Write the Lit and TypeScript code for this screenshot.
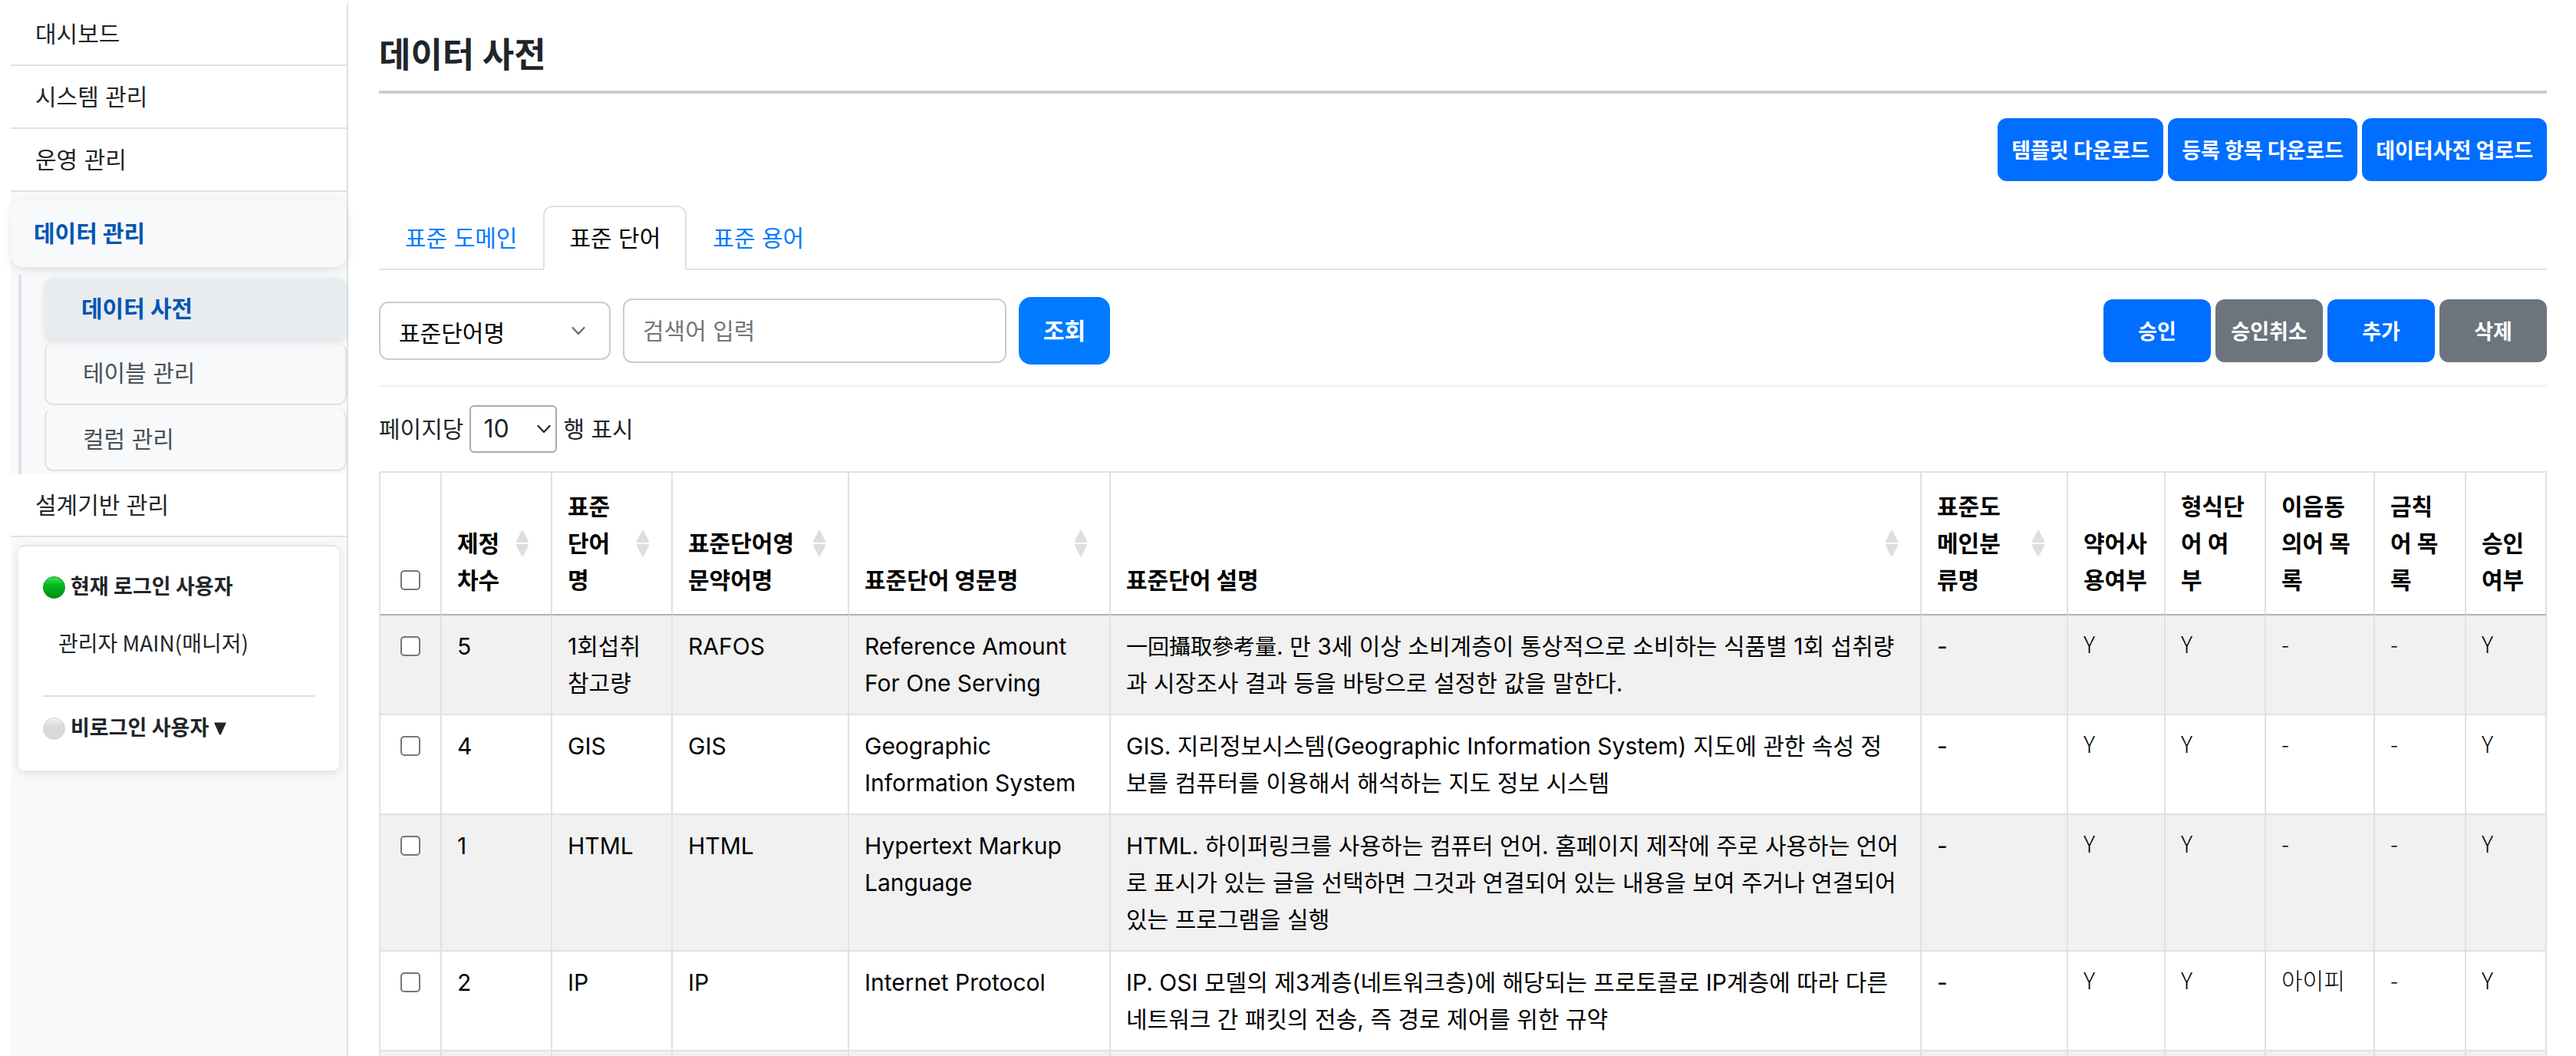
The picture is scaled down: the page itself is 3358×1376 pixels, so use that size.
import { LitElement, html, css } from "lit";
import { customElement, property } from "lit/decorators.js";
import { classMap } from "lit/directives/class-map.js";

interface Column {
  label: string;
  width: string;
  sortable: boolean;
  light?: boolean;
}

const COLUMNS: Column[] = [
  { label: "제정차수", width: "w-round", sortable: true },
  { label: "표준단어명", width: "w-word", sortable: true },
  { label: "표준단어영문약어명", width: "w-abbr", sortable: true },
  { label: "표준단어 영문명", width: "w-english", sortable: true },
  { label: "표준단어 설명", width: "w-auto", sortable: true },
  { label: "표준도메인분류명", width: "w-domain", sortable: true },
  { label: "약어사용여부", width: "w-use", sortable: false, light: true },
  { label: "형식단어 여부", width: "w-form", sortable: false, light: true },
  { label: "이음동의어 목록", width: "w-synonym", sortable: false, light: true },
  { label: "금칙어 목록", width: "w-banned", sortable: false, light: true },
  { label: "승인여부", width: "w-approved", sortable: false, light: true },
];

const ROWS: string[][] = [
  [
    "5", "1회섭취참고량", "RAFOS", "Reference Amount For One Serving",
    "一回攝取參考量. 만 3세 이상 소비계층이 통상적으로 소비하는 식품별 1회 섭취량과 시장조사 결과 등을 바탕으로 설정한 값을 말한다.",
    "-", "Y", "Y", "-", "-", "Y",
  ],
  [
    "4", "GIS", "GIS", "Geographic Information System",
    "GIS. 지리정보시스템(Geographic Information System) 지도에 관한 속성 정\n보를 컴퓨터를 이용해서 해석하는 지도 정보 시스템",
    "-", "Y", "Y", "-", "-", "Y",
  ],
  [
    "1", "HTML", "HTML", "Hypertext Markup Language",
    "HTML. 하이퍼링크를 사용하는 컴퓨터 언어. 홈페이지 제작에 주로 사용하는 언어로 표시가 있는 글을 선택하면 그것과 연결되어 있는 내용을 보여 주거나 연결되어 있는 프로그램을 실행",
    "-", "Y", "Y", "-", "-", "Y",
  ],
  [
    "2", "IP", "IP", "Internet Protocol",
    "IP. OSI 모델의 제3계층(네트워크층)에 해당되는 프로토콜로 IP계층에 따라 다른 네트워크 간 패킷의 전송, 즉 경로 제어를 위한 규약",
    "-", "Y", "Y", "아이피", "-", "Y",
  ],
];

@customElement("status-dot")
class StatusDot extends LitElement {
  @property({ type: Boolean }) online = false;

  static styles = css`
    :host { display: block; width: 29px; height: 29px; flex: none; }
    svg { display: block; width: 100%; height: 100%; }
  `;

  render() {
    const [rim, top, mid, bottom] = this.online
      ? ["#0a8f1c", "#3be858", "#00b81c", "#008d12"]
      : ["#d2d2d2", "#f4f4f4", "#dadada", "#d8d8d8"];
    return html`
      <svg viewBox="0 0 29 29" aria-hidden="true">
        <defs>
          <linearGradient id="fill" x1="0" y1="0" x2="0" y2="1">
            <stop offset="0" stop-color=${top}></stop>
            <stop offset="0.4" stop-color=${mid}></stop>
            <stop offset="1" stop-color=${bottom}></stop>
          </linearGradient>
        </defs>
        <circle cx="14.5" cy="14.5" r="14" fill="url(#fill)" stroke=${rim}></circle>
      </svg>
    `;
  }
}

@customElement("side-nav")
class SideNav extends LitElement {
  static styles = css`
    :host {
      display: block;
      background: #f8f9fb;
      border-right: 2px solid #dee2e6;
      color: #212529;
      font-size: 30px;
      line-height: 48px;
    }
    a { display: block; color: inherit; text-decoration: none; }
    .item { padding: 16px 32px; background: #fff; border-bottom: 2px solid #dee2e6; }
    .group {
      margin: 10px 0;
      padding: 20px 30px;
      border-radius: 16px;
      color: #0056b3;
      font-weight: 700;
      background: #f8f9fb;
      box-shadow: 0 4px 12px rgba(0, 0, 0, 0.1);
    }
    .sub {
      display: flex;
      flex-direction: column;
      gap: 4px;
      margin-left: 10px;
      padding: 4px 0 4px 30px;
      border-left: 4px solid #dee2e6;
    }
    .sub a {
      padding: 16px 48px;
      border: 2px solid #dee2e6;
      border-top: 0;
      border-radius: 12px;
      color: #495057;
    }
    .sub a.current {
      border: 0;
      background: #e9ecef;
      color: #0056b3;
      font-weight: 700;
      box-shadow: 0 4px 10px rgba(0, 0, 0, 0.1);
    }
    .users {
      margin: 10px;
      padding: 32px 32px 34px;
      border-top: 2px solid #dee2e6;
      border-radius: 8px;
      background: #fff;
      box-shadow: 0 4px 12px rgba(0, 0, 0, 0.1);
      font-size: 27px;
      line-height: 42px;
    }
    .heading { display: flex; align-items: center; gap: 7px; font-weight: 700; }
    .name { padding: 30px 20px 48px; font-family: "Noto Sans CJK KR", sans-serif; font-size: 28px; }
    .toggle {
      width: 100%;
      padding: 20px 0 0;
      border: 0;
      border-top: 2px solid #ddd;
      background: none;
      color: inherit;
      font-family: inherit;
      font-size: inherit;
      line-height: inherit;
    }
    .caret { width: 16px; height: 17px; }
  `;

  render() {
    return html`
      <nav>
        <a class="item" href="#dashboard">대시보드</a>
        <a class="item" href="#system">시스템 관리</a>
        <a class="item" href="#operation">운영 관리</a>
        <a class="group" href="#data">데이터 관리</a>
        <div class="sub">
          <a class="current" href="#dictionary">데이터 사전</a>
          <a href="#tables">테이블 관리</a>
          <a href="#columns">컬럼 관리</a>
        </div>
        <a class="item" href="#design">설계기반 관리</a>
      </nav>
      <section class="users">
        <div class="heading"><status-dot online></status-dot>현재 로그인 사용자</div>
        <div class="name">관리자 MAIN(매니저)</div>
        <button class="toggle heading" type="button">
          <status-dot></status-dot>비로그인 사용자
          <svg class="caret" viewBox="0 0 16 17" aria-hidden="true">
            <path d="M1 0.5H15Q16 0.5 15.6 1.6L9 16Q8 17.4 7 16L0.4 1.6Q0 0.5 1 0.5Z" fill="#212529"></path>
          </svg>
        </button>
      </section>
    `;
  }
}

@customElement("word-table")
class WordTable extends LitElement {
  static styles = css`
    :host { display: block; color: #000; font-size: 30px; line-height: 48px; }
    table {
      width: 100%;
      table-layout: fixed;
      border-collapse: separate;
      border-spacing: 0;
      border-top: 2px solid #dee2e6;
      border-left: 2px solid #dee2e6;
    }
    th, td {
      padding: 16px 20px;
      border-right: 2px solid #dee2e6;
      border-bottom: 2px solid #dee2e6;
      text-align: left;
      vertical-align: top;
    }
    td { white-space: pre-line; }
    th { padding: 20px; border-bottom-color: #b0b1b3; vertical-align: bottom; font-weight: 700; }
    th.sortable { padding-right: 28px; }
    tbody tr:nth-child(odd) { background: #f1f1f1; }
    .w-check { width: 80px; }
    .w-round { width: 144px; }
    .w-word { width: 157px; }
    .w-abbr { width: 230px; }
    .w-english { width: 341px; }
    .w-domain { width: 191px; }
    .w-use { width: 127px; }
    .w-form { width: 131px; }
    .w-synonym { width: 142px; }
    .w-banned { width: 119px; }
    .w-approved { width: 105px; }
    .head { display: flex; align-items: flex-end; justify-content: space-between; gap: 14px; height: 144px; }
    .sort { flex: none; align-self: center; width: 18px; height: 36px; }
    .light { font-family: "Noto Sans CJK KR", sans-serif; font-weight: 200; line-height: 40px; }
    .hanja { font-size: 28px; line-height: 28px; }
    .pick { padding: 16px 0; }
    th.pick { padding: 20px 0; }
    .pick label { display: flex; justify-content: center; align-items: center; height: 48px; }
    input {
      appearance: none;
      width: 26px;
      height: 26px;
      margin: 0;
      border: 2px solid #767676;
      border-radius: 5px;
      background: #fff;
    }
  `;

  private renderHead(column: Column) {
    if (!column.sortable) return html`<th>${column.label}</th>`;
    return html`
      <th class="sortable">
        <div class="head">
          <span>${column.label}</span>
          <svg class="sort" viewBox="0 0 18 36" aria-hidden="true">
            <path d="M8 1.5Q9 0 10 1.5L17 15Q17.5 17 15.5 17H2.5Q0.5 17 1 15Z" fill="#dedede"></path>
            <path d="M8 34.5Q9 36 10 34.5L17 21Q17.5 19 15.5 19H2.5Q0.5 19 1 21Z" fill="#dedede"></path>
          </svg>
        </div>
      </th>
    `;
  }

  /* Chinese characters are set a step smaller so that they pair with the Hangul beside them. */
  private renderText(text: string) {
    const [, hanja = "", rest = text] = text.match(/^([\u4e00-\u9fff]+)([^]*)$/) ?? [];
    return hanja ? html`<span class="hanja">${hanja}</span>${rest}` : rest;
  }

  render() {
    return html`
      <table>
        <colgroup>
          <col class="w-check" />
          ${COLUMNS.map((c) => html`<col class=${c.width} />`)}
        </colgroup>
        <thead>
          <tr>
            <th class="pick"><label><input type="checkbox" aria-label="전체 선택" /></label></th>
            ${COLUMNS.map((c) => this.renderHead(c))}
          </tr>
        </thead>
        <tbody>
          ${ROWS.map((row) => html`
            <tr>
              <td class="pick"><label><input type="checkbox" aria-label=${row[1]} /></label></td>
              ${row.map((text, i) => html`<td class=${classMap({ light: Boolean(COLUMNS[i].light) })}>${this.renderText(text)}</td>`)}
            </tr>
          `)}
          <tr><td></td>${COLUMNS.map(() => html`<td></td>`)}</tr>
        </tbody>
      </table>
    `;
  }
}

@customElement("app-root")
class AppRoot extends LitElement {
  static styles = css`
    :host {
      display: grid;
      grid-template-columns: 440px minmax(0, 1fr);
      gap: 40px;
      box-sizing: border-box;
      height: 100vh;
      overflow: hidden;
      padding: 4px 38px 0 14px;
      background: #fff;
      color: #212529;
      font-family: Inter, "Noto Sans CJK KR", sans-serif;
      font-size: 30px;
      line-height: 48px;
    }
    button, input, select { font-family: inherit; font-size: inherit; line-height: inherit; }
    h1 {
      margin: 0;
      padding: 38px 0 16px;
      border-bottom: 4px solid #ccc;
      font-size: 45px;
      line-height: 60px;
      font-weight: 700;
    }
    .actions { display: flex; justify-content: flex-end; gap: 6px; }
    .page-actions { padding: 32px 0; }
    .btn {
      min-width: 140px;
      padding: 17px 18px;
      border: 0;
      border-radius: 12px;
      background: #006eff;
      color: #fff;
      font-family: "Noto Sans CJK KR", sans-serif;
      font-size: 27px;
      font-weight: 700;
    }
    .btn.muted { background: #6c757d; }
    .tabs { display: flex; border-bottom: 2px solid #dee2e6; }
    .tab {
      margin-bottom: -2px;
      padding: 16px 32px;
      border: 2px solid transparent;
      border-radius: 12px 12px 0 0;
      color: #007bff;
      text-decoration: none;
    }
    .tab.active { border-color: #dee2e6 #dee2e6 #fff; background: #fff; color: #000; }
    .toolbar {
      display: flex;
      align-items: center;
      justify-content: space-between;
      padding: 35px 0 27px;
      border-bottom: 2px solid #f0f0f0;
    }
    .search { display: flex; align-items: center; gap: 16px; }
    .field { position: relative; display: inline-flex; }
    select, .query {
      box-sizing: border-box;
      appearance: none;
      margin: 0;
      border: 2px solid #ccc;
      border-radius: 12px;
      background: #fff;
      color: #000;
    }
    .criteria { width: 302px; height: 76px; padding: 6px 24px 0; }
    .query { width: 500px; height: 84px; padding: 0 24px; }
    .query::placeholder { color: #757575; opacity: 1; }
    .chevron { position: absolute; top: 0; bottom: 0; margin: auto 0; width: 18px; height: 12px; pointer-events: none; }
    .criteria + .chevron { right: 33px; stroke: #666; }
    .find {
      padding: 20px 32px;
      border: 0;
      border-radius: 16px;
      background: #007bff;
      color: #fff;
      font-weight: 700;
    }
    .length { display: flex; align-items: center; gap: 8px; padding: 24px 0; }
    .size { width: 114px; height: 62px; padding: 0 16px; border-color: #aaa; border-radius: 6px; color: #212529; font-size: 32px; }
    .size + .chevron { right: 8px; stroke: #212529; }
  `;

  private chevron() {
    return html`
      <svg class="chevron" viewBox="0 0 18 12" fill="none" stroke-width="2.2" stroke-linecap="round" aria-hidden="true">
        <path d="M1.5 2L9 10L16.5 2"></path>
      </svg>
    `;
  }

  private button(label: string, muted = false) {
    return html`<button type="button" class=${classMap({ btn: true, muted })}>${label}</button>`;
  }

  render() {
    return html`
      <side-nav></side-nav>
      <main>
        <h1>데이터 사전</h1>
        <div class="actions page-actions">
          ${this.button("템플릿 다운로드")} ${this.button("등록 항목 다운로드")} ${this.button("데이터사전 업로드")}
        </div>
        <nav class="tabs">
          <a class="tab" href="#domain">표준 도메인</a>
          <a class="tab active" href="#word">표준 단어</a>
          <a class="tab" href="#term">표준 용어</a>
        </nav>
        <div class="toolbar">
          <div class="search">
            <span class="field">
              <select class="criteria" aria-label="검색 조건"><option>표준단어명</option></select>
              ${this.chevron()}
            </span>
            <input class="query" type="text" placeholder="검색어 입력" aria-label="검색어" />
            <button class="find" type="button">조회</button>
          </div>
          <div class="actions">
            ${this.button("승인")} ${this.button("승인취소", true)} ${this.button("추가")} ${this.button("삭제", true)}
          </div>
        </div>
        <div class="length">
          <label for="size">페이지당</label>
          <span class="field">
            <select class="size" id="size"><option>10</option></select>
            ${this.chevron()}
          </span>
          <label for="size">행 표시</label>
        </div>
        <word-table></word-table>
      </main>
    `;
  }
}
